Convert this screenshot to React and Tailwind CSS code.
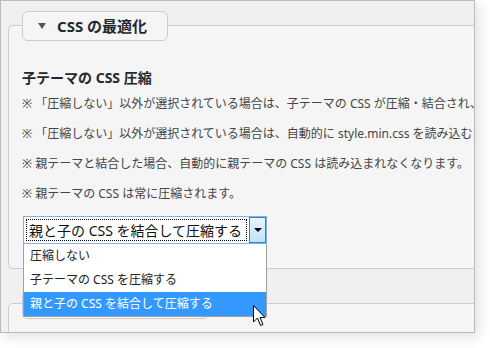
import React from 'react';

const notes = [
  '※ 「圧縮しない」以外が選択されている場合は、子テーマの CSS が圧縮・結合され、style.min.css として出力されます。',
  '※ 「圧縮しない」以外が選択されている場合は、自動的に style.min.css を読み込むようになります。',
  '※ 親テーマと結合した場合、自動的に親テーマの CSS は読み込まれなくなります。',
  '※ 親テーマの CSS は常に圧縮されます。',
];

const options = ['圧縮しない', '子テーマの CSS を圧縮する', '親と子の CSS を結合して圧縮する'];

function Cursor() {
  return (
    <svg className="absolute left-[253px] top-[305px]" width="13" height="22" viewBox="0 0 13 22">
      <path
        d="M0.5 0.5 L0.5 17 L4.5 13 L7.5 20.5 L10 19.5 L7 12.5 L12 12.5 Z"
        fill="#fff"
        stroke="#000"
        strokeWidth="1"
        strokeLinejoin="miter"
      />
    </svg>
  );
}

export default function App() {
  return (
    <div className="relative w-[490px] h-[348px] bg-white font-['Noto_Sans','Noto_Sans_CJK_JP',sans-serif]">
      <div className="w-[475px] h-[333px] border border-[#bbbbbb] bg-[#f0f0f0] overflow-hidden shadow-[4px_4px_12px_rgba(0,0,0,0.12)]">
        {/* settings panel */}
        <div className="ml-[7px] mt-[24px] w-[520px] h-[244px] border border-r-0 border-[#cccccc] rounded-l-[5px] bg-[#f5f5f5]">
          <div className="ml-[13px] -mt-[15px] w-[146px] h-[30px] border border-[#cccccc] rounded-[6px] bg-[#f5f5f5] flex items-center">
            <span className="ml-[15px] w-0 h-0 border-l-[4px] border-r-[4px] border-t-[6px] border-l-transparent border-r-transparent border-t-[#555]" />
            <span className="ml-[11px] text-[15px] font-bold text-[#23282d] leading-none">CSS の最適化</span>
          </div>

          <div className="ml-[13px] mt-[26px] h-[20px] flex items-center text-[14px] font-bold text-[#23282d]">
            子テーマの CSS 圧縮
          </div>

          <div className="ml-[13px] mt-[2px]">
            {notes.map((n) => (
              <div key={n} className="h-[30px] flex items-center whitespace-nowrap text-[12px] text-[#444]">
                {n}
              </div>
            ))}
          </div>

          {/* select */}
          <div className="ml-[14px] mt-[7px] w-[244px] h-[28px] border border-[#7eb4ea] bg-white flex items-stretch">
            <div className="flex-1 m-[2px] border border-dotted border-black flex items-center pl-[2px] text-[14px] text-[#111] whitespace-nowrap">
              親と子の CSS を結合して圧縮する
            </div>
            <div className="w-[17px] border border-[#3c7fb1] bg-[linear-gradient(#e8f5fc,#bfe3f7)] flex items-center justify-center">
              <span className="w-0 h-0 border-l-[4px] border-r-[4px] border-t-[4px] border-l-transparent border-r-transparent border-t-black" />
            </div>
          </div>
        </div>

        {/* next panel */}
        <div className="ml-[7px] mt-[34px] w-[520px] h-[40px] border border-r-0 border-b-0 border-[#cccccc] rounded-tl-[5px] bg-[#f5f5f5]">
          <div className="ml-[13px] -mt-[15px] w-[187px] h-[30px] border border-[#cccccc] rounded-[6px] bg-[#f5f5f5]" />
        </div>
      </div>

      {/* open dropdown list */}
      <div className="absolute left-[23px] top-[244px] w-[244px] h-[73px] border border-t-0 border-[#a0a0a0] bg-white text-[12px]">
        {options.map((o, i) => (
          <div
            key={o}
            className={
              i === 2
                ? 'h-[24px] flex items-center pl-[6px] bg-[#3399ff] text-white whitespace-nowrap'
                : 'h-[24px] flex items-center pl-[6px] text-[#222] whitespace-nowrap'
            }
          >
            {o}
          </div>
        ))}
      </div>

      <Cursor />
    </div>
  );
}
